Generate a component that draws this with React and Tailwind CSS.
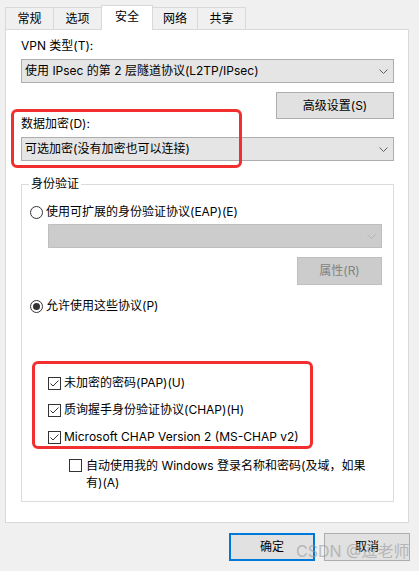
const font = { fontFamily: 'Inter, "Noto Sans CJK SC", sans-serif' };

function Chevron({ color = "#606060" }) {
  return (
    <svg width="9" height="5" viewBox="0 0 9 5" className="shrink-0">
      <polyline points="0.5,0.5 4.5,4.5 8.5,0.5" fill="none" stroke={color} strokeWidth="1" />
    </svg>
  );
}

function Combo({ text, disabled, className = "" }) {
  return (
    <div
      className={
        "flex items-center justify-between h-[24px] pl-[3px] pr-[5px] border " +
        (disabled ? "bg-[#cccccc] border-[#bfbfbf]" : "bg-[#e5e5e5] border-[#adadad]") +
        " " + className
      }
    >
      <span className="leading-[16px] whitespace-nowrap">{text}</span>
      <Chevron color={disabled ? "#b3b3b3" : "#606060"} />
    </div>
  );
}

function Radio({ checked }) {
  return (
    <span className="w-[13px] h-[13px] rounded-full border border-[#333333] bg-white flex items-center justify-center shrink-0">
      {checked && <span className="w-[7px] h-[7px] rounded-full bg-[#333333]" />}
    </span>
  );
}

function Check({ checked }) {
  return (
    <span className="w-[13px] h-[13px] border border-[#333333] bg-white flex items-center justify-center shrink-0">
      {checked && (
        <svg width="11" height="11" viewBox="0 0 11 11">
          <polyline points="1.5,5.5 4,8 9.5,2.5" fill="none" stroke="#333333" strokeWidth="1" />
        </svg>
      )}
    </span>
  );
}

function Tab({ label, active, w }) {
  return (
    <div
      className={
        "-ml-px first:ml-0 border-t border-l border-r border-[#d9d9d9] flex justify-center " +
        (active ? "bg-white h-[25px] pt-[3px] relative z-10" : "bg-[#f0f0f0] h-[22px] mb-[1px] pt-[3px]")
      }
      style={{ width: w }}
    >
      <span className="leading-[16px]">{label}</span>
    </div>
  );
}

export default function App() {
  return (
    <div className="relative w-[419px] h-[571px] bg-[#f0f0f0] overflow-hidden text-[12px] text-black pt-[5px]" style={font}>
      {/* tabs */}
      <div className="flex items-end pl-[5px] h-[25px] -mb-px relative z-10">
        <Tab label="常规" w={49} />
        <Tab label="选项" w={49} />
        <Tab label="安全" w={52} active />
        <Tab label="网络" w={46} />
        <Tab label="共享" w={49} />
      </div>

      {/* panel */}
      <div className="ml-[5px] w-[404px] h-[494px] bg-white border border-[#d9d9d9] flex flex-col pl-[15px]">
        <div className="mt-[8px] leading-[16px]">VPN 类型(T):</div>
        <Combo className="mt-[5px] w-[373px]" text="使用 IPsec 的第 2 层隧道协议(L2TP/IPsec)" />
        <button className="mt-[9px] ml-[255px] w-[118px] h-[27px] bg-[#e1e1e1] border border-[#adadad] leading-[16px]">
          高级设置(S)
        </button>
        <div className="mt-[-3px] leading-[16px]">数据加密(D):</div>
        <Combo className="mt-[5px] w-[373px]" text="可选加密(没有加密也可以连接)" />

        {/* group box */}
        <div className="relative mt-[23px] w-[373px] h-[318px] border border-[#dcdcdc] flex flex-col">
          <span className="absolute left-[7px] -top-[9px] px-[2px] bg-white leading-[16px]">身份验证</span>
          <div className="mt-[19px] ml-[8px] flex items-center gap-[3px] leading-[16px]">
            <Radio />
            <span>使用可扩展的身份验证协议(EAP)(E)</span>
          </div>
          <Combo disabled className="mt-[4px] ml-[26px] w-[334px]" text="" />
          <div className="mt-[9px] ml-[275px] w-[85px] h-[28px] bg-[#cccccc] border border-[#bfbfbf] text-[#838383] flex items-center justify-center">
            属性(R)
          </div>
          <div className="mt-[13px] ml-[8px] flex items-center gap-[3px] leading-[16px]">
            <Radio checked />
            <span>允许使用这些协议(P)</span>
          </div>

          <div className="mt-[61px] ml-[26px] flex flex-col gap-[11px]">
            <div className="flex items-center gap-[3px] leading-[16px]">
              <Check checked />
              <span>未加密的密码(PAP)(U)</span>
            </div>
            <div className="flex items-center gap-[3px] leading-[16px]">
              <Check checked />
              <span>质询握手身份验证协议(CHAP)(H)</span>
            </div>
            <div className="flex items-center gap-[3px] leading-[16px]">
              <Check checked />
              <span>Microsoft CHAP Version 2 (MS-CHAP v2)</span>
            </div>
          </div>

          <div className="mt-[12px] ml-[47px] flex items-start gap-[4px] leading-[17px]">
            <span className="mt-[2px]">
              <Check />
            </span>
            <span className="w-[290px]">自动使用我的 Windows 登录名称和密码(及域，如果有)(A)</span>
          </div>
        </div>
      </div>

      {/* bottom buttons */}
      <div className="flex justify-end gap-[9px] pr-[9px] mt-[10px]">
        <button className="w-[86px] h-[28px] bg-[#e1e1e1] border-2 border-[#0078d7] leading-[16px]">确定</button>
        <button className="w-[86px] h-[28px] bg-[#e1e1e1] border border-[#adadad] leading-[16px]">取消</button>
      </div>

      {/* annotation boxes */}
      <div className="absolute left-[11px] top-[109px] w-[231px] h-[59px] border-[3px] border-[#f22f2f] rounded-[6px]" />
      <div className="absolute left-[32px] top-[361px] w-[281px] h-[88px] border-[3px] border-[#f22f2f] rounded-[6px]" />

      {/* watermark */}
      <span className="absolute left-[296px] top-[541px] text-[16px] leading-[20px] text-[#9a9a9a] opacity-60 whitespace-nowrap">
        CSDN @逗老师
      </span>
    </div>
  );
}
